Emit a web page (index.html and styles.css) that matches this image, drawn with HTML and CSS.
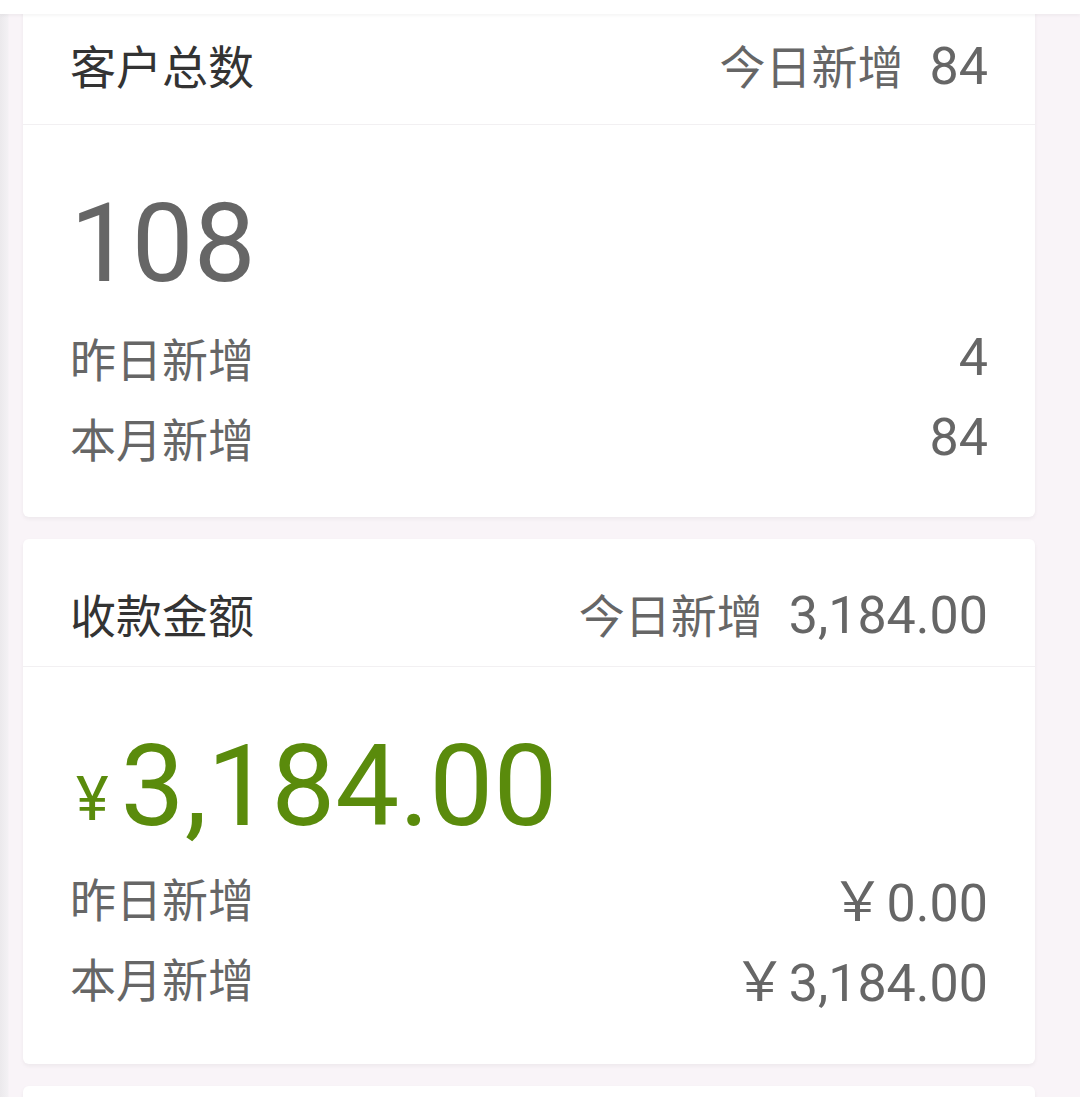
FILE: index.html
```html
<!DOCTYPE html>
<html lang="zh-CN">
<head>
    <meta charset="UTF-8">
    <meta name="viewport" content="width=device-width, initial-scale=1.0">
    <title>数据统计</title>
    <link rel="stylesheet" href="styles.css">
</head>
<body>
    <div class="topbar"></div>
    <div class="list">
        <div class="card first">
            <div class="card-head">
                <span class="title">客户总数</span>
                <span class="today">今日新增<span class="num gap">84</span></span>
            </div>
            <div class="card-body">
                <div class="big">108</div>
                <div class="row">
                    <span>昨日新增</span>
                    <span class="num">4</span>
                </div>
                <div class="row">
                    <span>本月新增</span>
                    <span class="num">84</span>
                </div>
            </div>
        </div>
        <div class="card">
            <div class="card-head">
                <span class="title">收款金额</span>
                <span class="today">今日新增<span class="num gap">3,184.00</span></span>
            </div>
            <div class="card-body pay">
                <div class="big money"><span class="yen">¥</span>3,184.00</div>
                <div class="row">
                    <span>昨日新增</span>
                    <span><span class="cny">￥</span><span class="num">0.00</span></span>
                </div>
                <div class="row">
                    <span>本月新增</span>
                    <span><span class="cny">￥</span><span class="num">3,184.00</span></span>
                </div>
            </div>
        </div>
        <div class="card"></div>
    </div>
</body>
</html>
```

FILE: styles.css
```css
html, body{
    margin:0;
    padding:0;
}
body{
    background:linear-gradient(to right, #ebe9ec 0, #f3f1f4 8px, #f9f4f8 9px);
    font-family:Roboto, "Noto Sans CJK SC", sans-serif;
    color:#666;
    overflow:hidden;
    height:1097px;
}
.topbar{
    position:fixed;
    top:0;
    left:0;
    right:0;
    height:14px;
    background:#fff;
    box-shadow:0 2px 3px rgba(0,0,0,0.04);
    z-index:2;
}
.list{
    margin:-6px 45px 0 23px;
}
.card{
    background:#fff;
    border-radius:6px;
    box-shadow:0 2px 4px rgba(0,0,0,0.05);
    margin-bottom:22px;
    min-height:60px;
}
.card-head{
    height:128px;
    box-sizing:border-box;
    padding:20px 47px 0 47px;
    display:flex;
    justify-content:space-between;
    align-items:center;
    border-bottom:1px solid #f2f0f2;
    font-size:46px;
}
.first .card-head{
    height:131px;
    padding-top:10px;
}
.title{
    color:#333;
}
.today{
    color:#666;
}
.num{
    font-family:Roboto, sans-serif;
    font-size:52px;
}
.gap{
    margin-left:26px;
}
.cny{
    font-size:54px;
    margin-right:2px;
}
.card-body{
    padding:49px 47px 40px 47px;
}
.card-body.pay{
    padding-bottom:47px;
}
.big{
    font-size:110px;
    line-height:140px;
    margin-bottom:3px;
    color:#666;
}
.money{
    font-size:114px;
    margin-bottom:1px;
    color:#5a8b0c;
}
.yen{
    font-size:62px;
    line-height:1;
    margin-left:6px;
    margin-right:12px;
    vertical-align:5px;
}
.row{
    display:flex;
    justify-content:space-between;
    align-items:center;
    height:80px;
    font-size:46px;
}
```
